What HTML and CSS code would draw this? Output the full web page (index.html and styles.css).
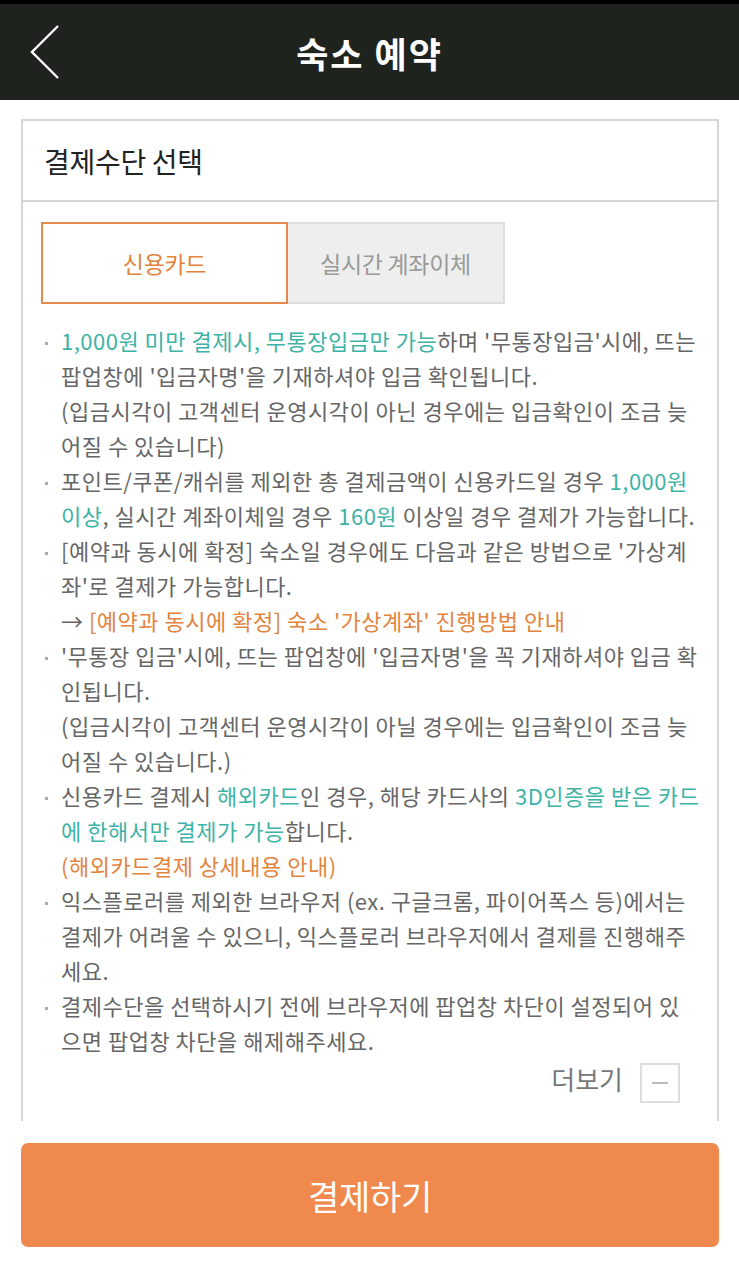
FILE: index.html
```html
<!DOCTYPE html>
<html>
<head>
  <title>숙소 예약</title>
  <link rel="stylesheet" href="styles.css">
</head>
<body>
  <header class="top-bar">
    <a class="back" href="#">
      <svg width="30" height="54" viewBox="0 0 30 54">
        <polyline points="28,1 2,27 28,53" fill="none" stroke="#fff" stroke-width="2.4"/>
      </svg>
    </a>
    <h1>숙소 예약</h1>
  </header>

  <div class="card">
    <div class="card-title">결제수단 선택</div>

    <div class="tabs">
      <div class="tab selected">신용카드</div>
      <div class="tab">실시간 계좌이체</div>
    </div>

    <ul class="notes">
      <li><span class="teal">1,000원 미만 결제시, 무통장입금만 가능</span>하며 '무통장입금'시에, 뜨는 팝업창에 '입금자명'을 기재하셔야 입금 확인됩니다.<br>(입금시각이 고객센터 운영시각이 아닌 경우에는 입금확인이 조금 늦어질 수 있습니다)</li>
      <li>포인트/쿠폰/캐쉬를 제외한 총 결제금액이 신용카드일 경우 <span class="teal">1,000원 이상</span>, 실시간 계좌이체일 경우 <span class="teal">160원</span> 이상일 경우 결제가 가능합니다.</li>
      <li>[예약과 동시에 확정] 숙소일 경우에도 다음과 같은 방법으로 '가상계좌'로 결제가 가능합니다.<br>→ <span class="orange">[예약과 동시에 확정] 숙소 '가상계좌' 진행방법 안내</span></li>
      <li>'무통장 입금'시에, 뜨는 팝업창에 '입금자명'을 꼭 기재하셔야 입금 확인됩니다.<br>(입금시각이 고객센터 운영시각이 아닐 경우에는 입금확인이 조금 늦어질 수 있습니다.)</li>
      <li>신용카드 결제시 <span class="teal">해외카드</span>인 경우, 해당 카드사의 <span class="teal">3D인증을 받은 카드에 한해서만 결제가 가능</span>합니다.<br><span class="orange">(해외카드결제 상세내용 안내)</span></li>
      <li>익스플로러를 제외한 브라우저 (ex. 구글크롬, 파이어폭스 등)에서는 결제가 어려울 수 있으니, 익스플로러 브라우저에서 결제를 진행해주세요.</li>
      <li>결제수단을 선택하시기 전에 브라우저에 팝업창 차단이 설정되어 있<span class="nowrap">으면</span> 팝업창 차단을 해제해주세요.</li>
    </ul>

    <div class="more">
      <span class="more-label">더보기</span>
      <span class="more-box"></span>
    </div>
  </div>

  <div class="footer">
    <button class="pay-button">결제하기</button>
  </div>
</body>
</html>
```

FILE: styles.css
```css
body {
  margin: 0;
  font-family: "Noto Sans CJK KR", "Noto Sans", sans-serif;
  background: #fff;
  width: 739px;
}

.top-bar {
  height: 96px;
  border-top: 4px solid #000;
  background-color: #1f231e;
  display: flex;
  align-items: center;
  justify-content: center;
  position: relative;
}

.top-bar h1 {
  margin: 0;
  color: #fff;
  font-size: 35px;
  font-weight: bold;
  letter-spacing: 2px;
}

.back {
  position: absolute;
  left: 30px;
  top: 21px;
  line-height: 0;
}

.card {
  margin: 19px 20px 0 21px;
  border: 2px solid #d6d6d6;
  border-bottom: none;
}

.card-title {
  height: 79px;
  border-bottom: 2px solid #d6d6d6;
  display: flex;
  align-items: center;
  padding-left: 21px;
  font-size: 28px;
  color: #222;
  letter-spacing: -0.3px;
}

.tabs {
  display: flex;
  padding: 20px 0 0 18px;
}

.tab {
  width: 215px;
  height: 78px;
  display: flex;
  align-items: center;
  justify-content: center;
  font-size: 23px;
  letter-spacing: -0.3px;
  color: #999;
  background-color: #eeeeee;
  border: 2px solid #dcdcdc;
  border-left: none;
}

.tab.selected {
  width: 243px;
  color: #e2843f;
  background-color: #fff;
  border: 2px solid #e58a4c;
}

.notes {
  list-style: none;
  margin: 19px 0 0 0;
  padding: 0 16px 0 38px;
  font-size: 22px;
  line-height: 35px;
  letter-spacing: 0.5px;
  color: #666;
}

.notes li {
  position: relative;
}

.notes li::before {
  content: "";
  position: absolute;
  left: -16px;
  top: 19px;
  width: 3px;
  height: 3px;
  background-color: #aaa;
}

.nowrap {
  white-space: nowrap;
}

.teal {
  color: #3db3a6;
}

.orange {
  color: #e2843f;
}

.more {
  display: flex;
  justify-content: flex-end;
  align-items: center;
  gap: 17px;
  padding: 5px 37px 18px 0;
  font-size: 26px;
  color: #777;
}

.more-label {
  margin-top: -10px;
}

.more-box {
  width: 36px;
  height: 36px;
  border: 2px solid #dedede;
  position: relative;
}

.more-box::after {
  content: "";
  position: absolute;
  left: 10px;
  right: 10px;
  top: 17px;
  height: 2px;
  background-color: #bbb;
}

.footer {
  padding: 22px 20px 20px 21px;
}

.pay-button {
  width: 100%;
  height: 104px;
  border: none;
  border-radius: 7px;
  background-color: #ef894e;
  color: #fff;
  font-family: "Noto Sans CJK KR", sans-serif;
  font-size: 34px;
  letter-spacing: -0.3px;
}
```
